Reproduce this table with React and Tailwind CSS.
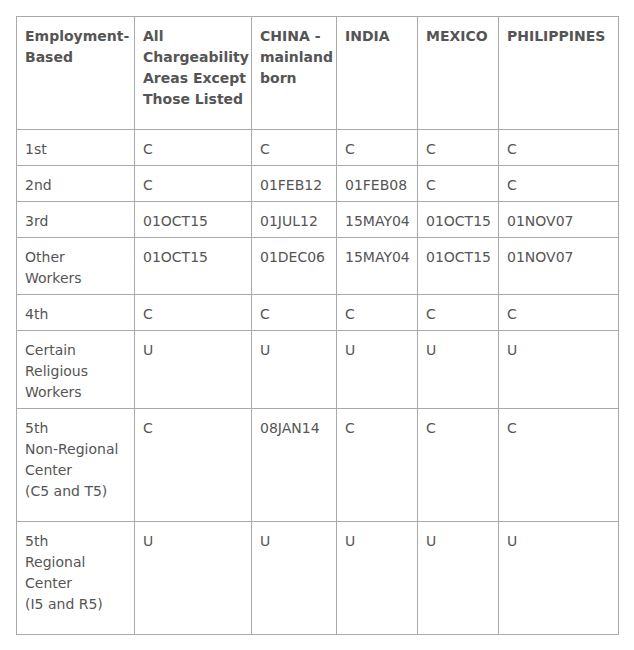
const headers = [
  ['Employment-', 'Based'],
  ['All', 'Chargeability', 'Areas Except', 'Those Listed'],
  ['CHINA -', 'mainland', 'born'],
  ['INDIA'],
  ['MEXICO'],
  ['PHILIPPINES'],
];

const rows = [
  { h: 'h-[36px]', label: ['1st'], cells: ['C', 'C', 'C', 'C', 'C'] },
  { h: 'h-[36px]', label: ['2nd'], cells: ['C', '01FEB12', '01FEB08', 'C', 'C'] },
  { h: 'h-[36px]', label: ['3rd'], cells: ['01OCT15', '01JUL12', '15MAY04', '01OCT15', '01NOV07'] },
  { h: 'h-[57px]', label: ['Other', 'Workers'], cells: ['01OCT15', '01DEC06', '15MAY04', '01OCT15', '01NOV07'] },
  { h: 'h-[36px]', label: ['4th'], cells: ['C', 'C', 'C', 'C', 'C'] },
  { h: 'h-[78px]', label: ['Certain', 'Religious', 'Workers'], cells: ['U', 'U', 'U', 'U', 'U'] },
  { h: 'h-[113px]', label: ['5th', 'Non-Regional', 'Center', '(C5 and T5)'], cells: ['C', '08JAN14', 'C', 'C', 'C'] },
  { h: 'h-[113px]', label: ['5th', 'Regional', 'Center', '(I5 and R5)'], cells: ['U', 'U', 'U', 'U', 'U'] },
];

function Lines({ lines }) {
  return lines.map((l, i) => (
    <span key={i} className="block whitespace-nowrap">
      {l}
    </span>
  ));
}

export default function App() {
  return (
    <div className="min-h-[650px] bg-white p-4 font-['DejaVu_Sans',Verdana,sans-serif] text-[14px] leading-[21px] text-[#555]">
      <table className="table-fixed border-collapse w-[602px]">
        <colgroup>
          <col className="w-[118px]" />
          <col className="w-[117px]" />
          <col className="w-[85px]" />
          <col className="w-[81px]" />
          <col className="w-[81px]" />
          <col className="w-[120px]" />
        </colgroup>
        <thead>
          <tr className="h-[113px]">
            {headers.map((h, i) => (
              <th key={i} className="border border-[#aaa] px-2 pt-[9px] pb-[5px] text-left align-top font-bold">
                <Lines lines={h} />
              </th>
            ))}
          </tr>
        </thead>
        <tbody>
          {rows.map((r, i) => (
            <tr key={i} className={r.h}>
              <td className="border border-[#aaa] px-2 pt-[9px] pb-[5px] align-top">
                <Lines lines={r.label} />
              </td>
              {r.cells.map((c, j) => (
                <td key={j} className="border border-[#aaa] px-2 pt-[9px] pb-[5px] align-top whitespace-nowrap">
                  {c}
                </td>
              ))}
            </tr>
          ))}
        </tbody>
      </table>
    </div>
  );
}
